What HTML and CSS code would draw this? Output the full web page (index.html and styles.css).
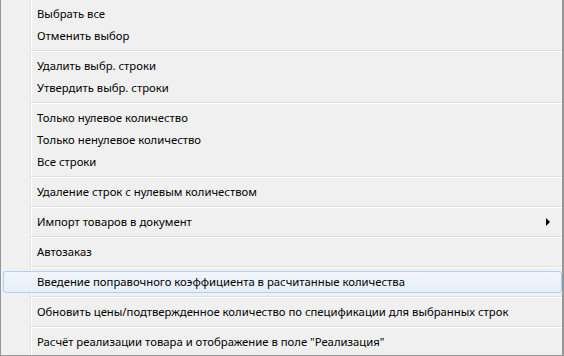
FILE: index.html
```html
<!doctype html>
<html lang="ru">
<head>
  <meta charset="UTF-8" />
  <title>Контекстное меню</title>
  <link rel="stylesheet" href="styles.css">
</head>
<body>
  <div class="context-menu">
    <div class="menu-item">Выбрать все</div>
    <div class="menu-item">Отменить выбор</div>
    <div class="menu-sep"></div>
    <div class="menu-item">Удалить выбр. строки</div>
    <div class="menu-item">Утвердить выбр. строки</div>
    <div class="menu-sep"></div>
    <div class="menu-item">Только нулевое количество</div>
    <div class="menu-item">Только ненулевое количество</div>
    <div class="menu-item">Все строки</div>
    <div class="menu-sep"></div>
    <div class="menu-item">Удаление строк с нулевым количеством</div>
    <div class="menu-sep"></div>
    <div class="menu-item has-sub">Импорт товаров в документ <span class="sub-arrow"></span></div>
    <div class="menu-sep"></div>
    <div class="menu-item">Автозаказ</div>
    <div class="menu-sep"></div>
    <div class="menu-item hover">Введение поправочного коэффициента в расчитанные количества</div>
    <div class="menu-sep"></div>
    <div class="menu-item">Обновить цены/подтвержденное количество по спецификации для выбранных строк</div>
    <div class="menu-sep"></div>
    <div class="menu-item">Расчёт реализации товара и отображение в поле "Реализация"</div>
  </div>
</body>
</html>
```

FILE: styles.css
```css
* {
  box-sizing: border-box;
  margin: 0;
  padding: 0;
}

body {
  font-family: 'Noto Sans', 'Open Sans', sans-serif;
  font-size: 11.3px;
  color: #000;
  background: #f0f0f0;
  width: 564px;
  height: 356px;
  overflow: hidden;
}

.context-menu {
  width: 564px;
  height: 356px;
  border: 1px solid #979797;
  border-top: none;
  border-right-width: 2px;
  padding: 3px 0 2px;
  /* gutter line on the left */
  background:
    linear-gradient(to right, transparent 29px, #e2e3e3 29px, #e2e3e3 30px, #ffffff 30px, #ffffff 31px, transparent 31px),
    #f0f0f0;
}

.menu-item {
  position: relative;
  height: 22px;
  line-height: 19px;
  padding-left: 34px;
  margin: 0 2px;
  white-space: nowrap;
  border: 1px solid transparent;
  border-left: none;
  border-right: none;
}

.menu-item.hover {
  margin: 0 0 0 2px;
  width: 559px;
  padding-left: 33px;
  border: 1px solid #a8d2fb;
  border-radius: 3px;
  background: linear-gradient(to bottom, #f2f6fb, #e6eef9);
}

.sub-arrow {
  position: absolute;
  right: 10px;
  top: 6px;
  width: 0;
  height: 0;
  border-top: 4px solid transparent;
  border-bottom: 4px solid transparent;
  border-left: 4px solid #000;
}

.menu-sep {
  height: 8px;
  margin-left: 30px;
  margin-right: 0;
  background: linear-gradient(to bottom, transparent 3px, #e0e0e0 3px, #e0e0e0 4px, #ffffff 4px, #ffffff 5px, transparent 5px);
}
```
